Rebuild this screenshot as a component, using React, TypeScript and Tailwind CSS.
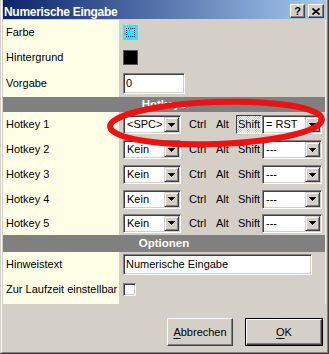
import React from "react";

const sunken =
  "border border-t-[#808080] border-l-[#808080] border-r-white border-b-white shadow-[inset_1px_1px_0_#404040,inset_-1px_-1px_0_#d4d0c8]";
const raised =
  "border border-t-white border-l-white border-r-[#404040] border-b-[#404040] shadow-[inset_-1px_-1px_0_#808080]";
const comboBtn =
  "border border-t-[#d4d0c8] border-l-[#d4d0c8] border-r-[#404040] border-b-[#404040] shadow-[inset_1px_1px_0_#ffffff,inset_-1px_-1px_0_#808080]";

function Arrow() {
  return (
    <svg width="7" height="4" viewBox="0 0 7 4" shapeRendering="crispEdges">
      <rect x="0" y="0" width="7" height="1" fill="#000" />
      <rect x="1" y="1" width="5" height="1" fill="#000" />
      <rect x="2" y="2" width="3" height="1" fill="#000" />
      <rect x="3" y="3" width="1" height="1" fill="#000" />
    </svg>
  );
}

function Combo({ value, w }: { value: string; w: string }) {
  return (
    <div className={`${sunken} ${w} h-[19px] bg-white p-[1px] flex items-stretch`}>
      <div className="flex-1 flex items-center pl-[2px] whitespace-nowrap overflow-hidden">{value}</div>
      <div className={`${comboBtn} w-[15px] bg-[#d4d0c8] flex items-center justify-center`}>
        <Arrow />
      </div>
    </div>
  );
}

function Row({
  label,
  h,
  children,
  extra,
}: {
  label: string;
  h: string;
  children?: React.ReactNode;
  extra?: string;
}) {
  return (
    <div className={`${h} flex`}>
      <div className={`w-[116px] bg-[#ffffe8] flex items-center pl-[3px] whitespace-nowrap ${extra ?? ""}`}>
        {label}
      </div>
      <div className={`flex-1 flex items-center pl-[4px] ${extra ?? ""}`}>{children}</div>
    </div>
  );
}

function Header({ title, h }: { title: string; h: string }) {
  return (
    <div className={`${h} bg-[#808080] flex items-center justify-center text-white font-bold text-[11.5px]`}>
      {title}
    </div>
  );
}

function HotkeyRow({
  n,
  k1,
  k2,
  active,
  h,
}: {
  n: number;
  k1: string;
  k2: string;
  active?: boolean;
  h: string;
}) {
  return (
    <Row label={`Hotkey ${n}`} h={h}>
      <Combo w="w-[58px]" value={k1} />
      <span className="ml-[8px] w-[27px]">Ctrl</span>
      <span className="w-[20px]">Alt</span>
      {active ? (
        <div className="w-[26px] h-[19px] flex items-center justify-center border border-t-[#404040] border-l-[#404040] border-r-white border-b-white bg-[repeating-conic-gradient(#ffffff_0%_25%,#d4d0c8_0%_50%)] bg-[length:2px_2px]">
          Shift
        </div>
      ) : (
        <div className="w-[26px] h-[19px] flex items-center justify-center">Shift</div>
      )}
      <Combo w="w-[60px]" value={k2} />
    </Row>
  );
}

export default function App() {
  return (
    <div className="relative w-[329px] h-[354px] bg-[#d4d0c8] pl-[1px] border-r border-b border-r-[#404040] border-b-[#404040] font-['Liberation_Sans',Arial,sans-serif] text-[11px] leading-[13px] text-black overflow-hidden">
      <div className="h-full border-l border-r border-b border-l-white border-r-[#808080] border-b-[#808080] px-[1px] flex flex-col">
        {/* Title bar */}
        <div className="h-[19px] flex items-start bg-[linear-gradient(to_right,#0a246a,#a6caf0)] pl-[1px]">
          <span className="pt-[5px] text-white font-bold text-[12px] leading-[14px] tracking-[-0.3px] whitespace-nowrap">
            Numerische Eingabe
          </span>
          <div className="ml-auto mr-[2px] mt-[4px] flex gap-[3px]">
            <div className={`${raised} w-[15px] h-[14px] bg-[#d4d0c8] flex items-center justify-center font-bold text-[11px] leading-[11px]`}>
              ?
            </div>
            <div className={`${raised} w-[16px] h-[14px] bg-[#d4d0c8] flex items-center justify-center`}>
              <svg width="8" height="7" viewBox="0 0 8 7">
                <path d="M0.5 0.5L7.5 6.5M7.5 0.5L0.5 6.5" stroke="#000" strokeWidth="1.6" />
              </svg>
            </div>
          </div>
        </div>

        {/* Property panel */}
        <div className="mt-[1px] h-[284px] flex flex-col border-r border-r-[#efefef]">
          <Row label="Farbe" h="h-[25px]">
            <div className="w-[15px] h-[15px] bg-[#00ffff] p-[3px]">
              <div className="w-full h-full border border-dotted border-[#0000a0]" />
            </div>
          </Row>
          <Row label="Hintergrund" h="h-[25px]">
            <div className="w-[15px] h-[15px] bg-black border border-[#555555]" />
          </Row>
          <Row label="Vorgabe" h="h-[27px]">
            <div className={`${sunken} w-[62px] h-[21px] bg-white flex items-center pl-[2px]`}>0</div>
          </Row>

          <Header title="Hotkeys" h="h-[15px]" />
          <HotkeyRow n={1} k1="<SPC>" k2="= RST" active h="h-[25px]" />
          <HotkeyRow n={2} k1="Kein" k2="---" h="h-[25px]" />
          <HotkeyRow n={3} k1="Kein" k2="---" h="h-[25px]" />
          <HotkeyRow n={4} k1="Kein" k2="---" h="h-[24px]" />
          <HotkeyRow n={5} k1="Kein" k2="---" h="h-[24px]" />

          <Header title="Optionen" h="h-[17px]" />
          <Row label="Hinweistext" h="h-[25px]">
            <div className={`${sunken} w-[189px] h-[21px] bg-white flex items-center pl-[2px]`}>
              Numerische Eingabe
            </div>
          </Row>
          <Row label="Zur Laufzeit einstellbar" h="h-[27px]" extra="pb-[3px]">
            <div className={`${sunken} w-[13px] h-[13px] bg-white`} />
          </Row>
        </div>

        {/* Buttons */}
        <div className="flex-1 flex justify-end items-start pt-[14px] pr-[3px] gap-[12px]">
          <div className={`${raised} w-[66px] h-[28px] bg-[#d4d0c8] flex items-center justify-center`}>
            <span>
              <span className="underline underline-offset-[2px]">A</span>bbrechen
            </span>
          </div>
          <div className="w-[78px] h-[28px] border border-black">
            <div className={`${raised} w-full h-full bg-[#d4d0c8] flex items-center justify-center`}>
              <span>
                <span className="underline underline-offset-[2px]">O</span>K
              </span>
            </div>
          </div>
        </div>
      </div>

      {/* Red annotation ellipse */}
      <svg
        className="absolute left-0 top-0 pointer-events-none"
        width="329"
        height="354"
        viewBox="0 0 329 354"
      >
        <ellipse
          cx="216"
          cy="123"
          rx="106"
          ry="21"
          fill="none"
          stroke="#ee1111"
          strokeWidth="6"
          transform="rotate(-2 216 123)"
        />
      </svg>
    </div>
  );
}
